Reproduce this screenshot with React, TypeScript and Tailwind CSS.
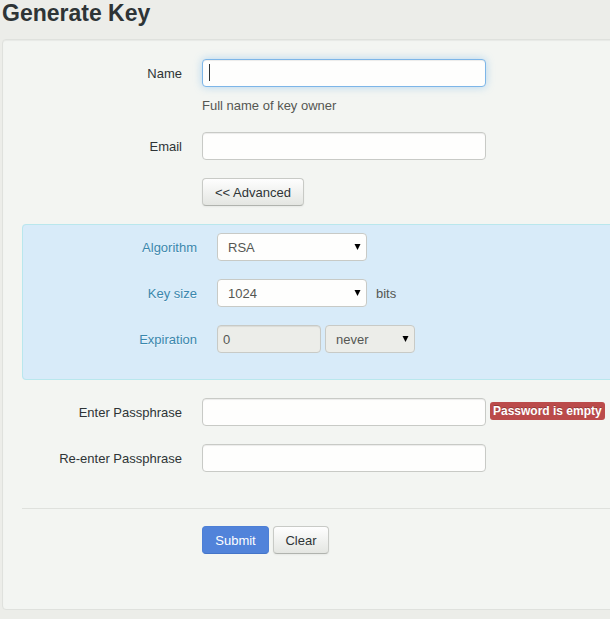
import type { ReactNode, SelectHTMLAttributes } from "react";

const box = "h-7 rounded border border-[#c8cac6] text-[13px] leading-5 text-[#555753]";
const textBox = `${box} w-[284px] shrink-0 bg-[#fefefd] px-1.5 shadow-[inset_0_1px_1px_rgba(0,0,0,0.075)] outline-none`;
const button = "h-7 rounded pt-0.5 text-[13px] leading-5 border";
const lightButton = `${button} border-[#c8cac6] border-b-[#b0b3ae] bg-linear-to-b from-[#fefefe] to-[#e4e6e2] text-[#2e3436] shadow-[0_1px_2px_rgba(0,0,0,0.05)]`;

function Row({ id, label, children, tint = false }: { id: string; label: string; children: ReactNode; tint?: boolean }) {
  return (
    <div className="flex items-center gap-5">
      <label
        htmlFor={id}
        className={`w-40 shrink-0 pt-0.5 text-right ${tint ? "text-[#3a87ad] [text-shadow:0_1px_0_rgba(255,255,255,0.5)]" : "text-[#2e3436]"}`}
      >
        {label}
      </label>
      <div className="flex items-center gap-1">{children}</div>
    </div>
  );
}

function Select({ width, fill, ...props }: { width: string; fill: string } & SelectHTMLAttributes<HTMLSelectElement>) {
  return (
    <span className={`relative block ${width}`}>
      <select {...props} className={`${box} ${fill} block w-full appearance-none px-2.5 pt-0.5 opacity-100 outline-none`} />
      <svg className="pointer-events-none absolute top-[11px] right-1.5" width="7" height="6" viewBox="0 0 7 6" aria-hidden="true">
        <path d="M0.5 0H6.5L3.5 6Z" fill="#000" />
      </svg>
    </span>
  );
}

export default function App() {
  return (
    <main className="min-h-screen overflow-hidden bg-[#ecede9] pb-2 pl-0.5 font-['Liberation_Sans',Arial,sans-serif] text-[13px] leading-5">
      <h1 className="pt-px text-[23px] leading-6 font-bold text-[#2e3436]">Generate Key</h1>
      <form
        className="mt-3.5 -mr-10 rounded border border-[#dfe1dd] bg-[#f3f5f2] px-[19px] pt-[19px] pb-[55px] shadow-[inset_0_1px_1px_rgba(0,0,0,0.05)]"
        onSubmit={(event) => event.preventDefault()}
      >
        <div className="flex flex-col gap-[18px]">
          <div>
            <Row id="name" label="Name">
              <span className="relative block">
                <input
                  id="name"
                  type="text"
                  aria-describedby="name-help"
                  className="block h-7 w-[284px] rounded border border-[#7db6e8] bg-[#fefefd] px-1.5 text-[#555753] caret-transparent shadow-[inset_0_1px_1px_rgba(0,0,0,0.075),0_0_8px_rgba(82,168,236,0.4)] outline-none"
                />
                <span className="pointer-events-none absolute top-[5px] left-[7px] h-[17px] w-px bg-[#2e3436]" />
              </span>
            </Row>
            <p id="name-help" className="mt-[11px] ml-[180px] leading-4 text-[#555753]">Full name of key owner</p>
          </div>
          <Row id="email" label="Email">
            <input id="email" type="email" className={textBox} />
          </Row>
          <div className="ml-[180px] flex">
            <button type="button" className={`${lightButton} px-3`}>&lt;&lt; Advanced</button>
          </div>
          <fieldset className="flex flex-col gap-[18px] rounded border border-[#b9e7ed] bg-[#d8ebf9] pt-2 pr-9 pb-[26px] pl-3.5">
            <Row id="algorithm" label="Algorithm" tint>
              <Select id="algorithm" width="w-[150px]" fill="bg-[#fefefd]">
                <option>RSA</option>
              </Select>
            </Row>
            <Row id="size" label="Key size" tint>
              <Select id="size" width="w-[150px]" fill="bg-[#fefefd]">
                <option>1024</option>
              </Select>
              <span className="ml-[5px] pt-0.5 text-[#555753]">bits</span>
            </Row>
            <Row id="expiration" label="Expiration" tint>
              <input
                id="expiration"
                type="text"
                defaultValue="0"
                disabled
                className={`${box} w-[104px] bg-[#ecede9] px-[5px] shadow-[inset_0_1px_1px_rgba(0,0,0,0.075)]`}
              />
              <Select aria-label="Expiration unit" width="w-[90px]" fill="bg-[#ecede9]" disabled>
                <option>never</option>
              </Select>
            </Row>
          </fieldset>
          <Row id="pass" label="Enter Passphrase">
            <input id="pass" type="password" className={textBox} />
            <span className="-mt-[3px] rounded-[3px] bg-[#bb4b4b] px-[3px] py-0.5 text-xs leading-[14px] font-bold whitespace-nowrap text-white [text-shadow:0_-1px_0_rgba(0,0,0,0.25)]">
              Password is empty
            </span>
          </Row>
          <Row id="repass" label="Re-enter Passphrase">
            <input id="repass" type="password" className={textBox} />
          </Row>
        </div>
        <div className="mt-9 flex gap-1 border-t border-[#dfe1dd] pt-[17px] pl-[180px]">
          <button type="submit" className={`${button} w-[67px] border-[#4d7fd6] border-b-[#4474c8] bg-[#5183da] text-white`}>Submit</button>
          <button type="reset" className={`${lightButton} w-14`}>Clear</button>
        </div>
      </form>
    </main>
  );
}
